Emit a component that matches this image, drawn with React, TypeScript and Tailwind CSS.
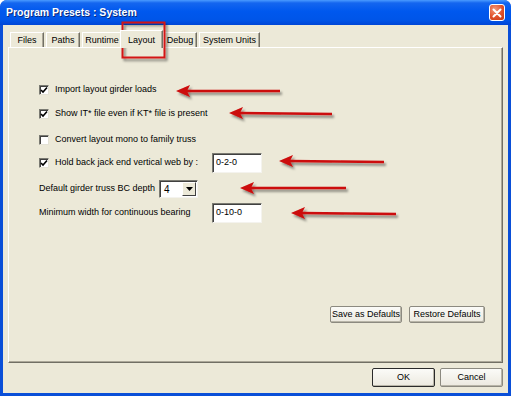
import { useState } from 'react'

const tabs = [
  { label: 'Files', w: 'w-[34px]' },
  { label: 'Paths', w: 'w-[34px]' },
  { label: 'Runtime', w: 'w-[40px]' },
  { label: 'Layout', w: 'w-[43px]', active: true },
  { label: 'Debug', w: 'w-[34px]' },
  { label: 'System Units', w: 'w-[61px]' },
]

const arrows = [
  { tip: 176, y: 91, end: 280, dy: 0 },
  { tip: 229, y: 113, end: 332, dy: 1 },
  { tip: 279, y: 161, end: 384, dy: 1 },
  { tip: 240, y: 188, end: 346, dy: 0 },
  { tip: 291, y: 213, end: 396, dy: 1 },
]

function Checkbox({ checked }: { checked: boolean }) {
  return (
    <span className="w-[10px] h-[10px] shrink-0 bg-white border-t border-l border-[#7a7a72] border-b border-r border-b-[#e4e2d6] border-r-[#e4e2d6] shadow-[inset_1px_1px_0_#404040] flex items-center justify-center">
      {checked && (
        <svg width="8" height="8" viewBox="0 0 8 8">
          <path d="M1 4 L3 6 L7 1.5" fill="none" stroke="#000" strokeWidth="1.6" />
        </svg>
      )}
    </span>
  )
}

function TextBox({ value }: { value: string }) {
  return (
    <div className="w-[50px] h-[20px] bg-white border-t border-l border-[#7a7a72] border-b border-r border-b-[#f4f3ee] border-r-[#f4f3ee] shadow-[inset_1px_1px_0_#404040] flex items-center pl-[3px] text-[9px] text-black">
      {value}
    </div>
  )
}

function Btn({ children, w, isDefault }: { children: React.ReactNode; w: string; isDefault?: boolean }) {
  return (
    <button
      className={`${w} h-full bg-[linear-gradient(to_bottom,#fbfbf8,#ece9df)] rounded-[2px] text-[9px] text-black flex items-center justify-center border ${
        isDefault ? 'border-[#2a2a2a]' : 'border-[#8c8a80]'
      } shadow-[inset_-1px_-1px_0_#b8b5a8]`}
    >
      {children}
    </button>
  )
}

export default function App() {
  const [checks] = useState([true, true, false, true])

  return (
    <div
      className="relative w-[511px] h-[396px] bg-[#0a4fd8] rounded-t-[7px] flex flex-col overflow-hidden select-none"
      style={{ fontFamily: '"Liberation Sans", Arial, sans-serif' }}
    >
      {/* title bar */}
      <div className="h-[25px] shrink-0 flex items-center justify-between pl-[6px] pr-[6px] bg-[linear-gradient(to_bottom,#4a9bff_0%,#1466ef_12%,#0058ee_45%,#0055e8_80%,#0046d6_100%)]">
        <span className="text-white font-bold text-[10.5px] [text-shadow:1px_1px_0_#0a2a7a]">Program Presets : System</span>
        <span className="w-[16px] h-[17px] rounded-[3px] border border-white bg-[radial-gradient(circle_at_35%_30%,#f39a7a,#e0502a_55%,#c53a16)] flex items-center justify-center">
          <svg width="10" height="10" viewBox="0 0 10 10">
            <path d="M1.5 1.5 L8.5 8.5 M8.5 1.5 L1.5 8.5" stroke="#fff" strokeWidth="2" strokeLinecap="round" />
          </svg>
        </span>
      </div>

      {/* body */}
      <div className="flex-1 mx-[3px] mb-[3px] bg-[#ece9d8] flex flex-col px-[5px] text-[9px] text-black">
        {/* tab strip */}
        <div className="h-[22px] shrink-0 flex items-end pl-[2px]">
          {tabs.map((t) =>
            t.active ? (
              <div
                key={t.label}
                className={`${t.w} h-[18px] -mb-px relative z-10 bg-[#ece9d8] border-t border-l border-white border-r border-r-[#716f64] shadow-[inset_-1px_0_0_#aca899] flex items-start justify-center pt-[3px] -mx-[2px]`}
              >
                {t.label}
              </div>
            ) : (
              <div
                key={t.label}
                className={`${t.w} h-[15px] bg-[#ece9d8] border-t border-l border-white border-r border-r-[#716f64] shadow-[inset_-1px_0_0_#aca899] flex items-center justify-center ml-[2px] first:ml-0 pt-px`}
              >
                {t.label}
              </div>
            )
          )}
        </div>

        {/* tab panel */}
        <div className="h-[316px] shrink-0 border-t border-l border-white border-r border-b border-r-[#716f64] border-b-[#716f64] shadow-[inset_-1px_-1px_0_#aca899] flex flex-col pl-[30px] pt-[32px]">
          <div className="h-[20px] flex items-center gap-[6px]">
            <Checkbox checked={checks[0]} />
            <span>Import layout girder loads</span>
          </div>
          <div className="h-[20px] mt-[4px] flex items-center gap-[6px]">
            <Checkbox checked={checks[1]} />
            <span>Show IT* file even if KT* file is present</span>
          </div>
          <div className="h-[20px] mt-[6px] flex items-center gap-[6px]">
            <Checkbox checked={checks[2]} />
            <span>Convert layout mono to family truss</span>
          </div>
          <div className="h-[20px] mt-[3px] flex items-center">
            <Checkbox checked={checks[3]} />
            <span className="w-[163px] pl-[6px]">Hold back jack end vertical web by :</span>
            <TextBox value="0-2-0" />
          </div>
          <div className="h-[20px] mt-[6px] flex items-center">
            <span className="w-[120px]">Default girder truss BC depth</span>
            <div className="w-[39px] h-[18px] bg-white border-t border-l border-[#7a7a72] border-b border-r border-b-[#f4f3ee] border-r-[#f4f3ee] shadow-[inset_1px_1px_0_#404040] flex items-center justify-between pl-[4px] pr-[1px]">
              <span className="text-[10px]">4</span>
              <span className="w-[14px] h-[14px] bg-[#ece9d8] border border-t-white border-l-white border-b-[#404040] border-r-[#404040] flex items-center justify-center">
                <svg width="7" height="4" viewBox="0 0 7 4">
                  <path d="M0 0 L7 0 L3.5 4 Z" fill="#000" />
                </svg>
              </span>
            </div>
          </div>
          <div className="h-[20px] mt-[4px] flex items-center">
            <span className="w-[173px]">Minimum width for continuous bearing</span>
            <TextBox value="0-10-0" />
          </div>

          <div className="mt-auto mb-[39px] h-[17px] flex justify-end gap-[7px] pr-[17px]">
            <Btn w="w-[72px]">Save as Defaults</Btn>
            <Btn w="w-[76px]">Restore Defaults</Btn>
          </div>
        </div>

        {/* dialog buttons */}
        <div className="h-[19px] mt-[5px] flex justify-end gap-[5px]">
          <Btn w="w-[63px]" isDefault>
            OK
          </Btn>
          <Btn w="w-[63px]">Cancel</Btn>
        </div>
      </div>

      {/* annotation overlay */}
      <svg className="absolute inset-0 pointer-events-none" width="511" height="396" viewBox="0 0 511 396">
        <defs>
          <filter id="sh" x="-20%" y="-50%" width="140%" height="200%">
            <feDropShadow dx="2" dy="2.5" stdDeviation="1.3" floodColor="#000" floodOpacity="0.45" />
          </filter>
        </defs>
        <rect x="122.5" y="22.5" width="42" height="35" fill="none" stroke="#d31515" strokeWidth="2" filter="url(#sh)" />
        {arrows.map((a, i) => (
          <g key={i} filter="url(#sh)">
            <line x1={a.tip + 10} y1={a.y} x2={a.end} y2={a.y + a.dy} stroke="#cc0a0a" strokeWidth="2.5" />
            <path
              d={`M${a.tip} ${a.y} L${a.tip + 14} ${a.y - 6} L${a.tip + 11} ${a.y} L${a.tip + 14} ${a.y + 6} Z`}
              fill="#cc0a0a"
            />
          </g>
        ))}
      </svg>
    </div>
  )
}
